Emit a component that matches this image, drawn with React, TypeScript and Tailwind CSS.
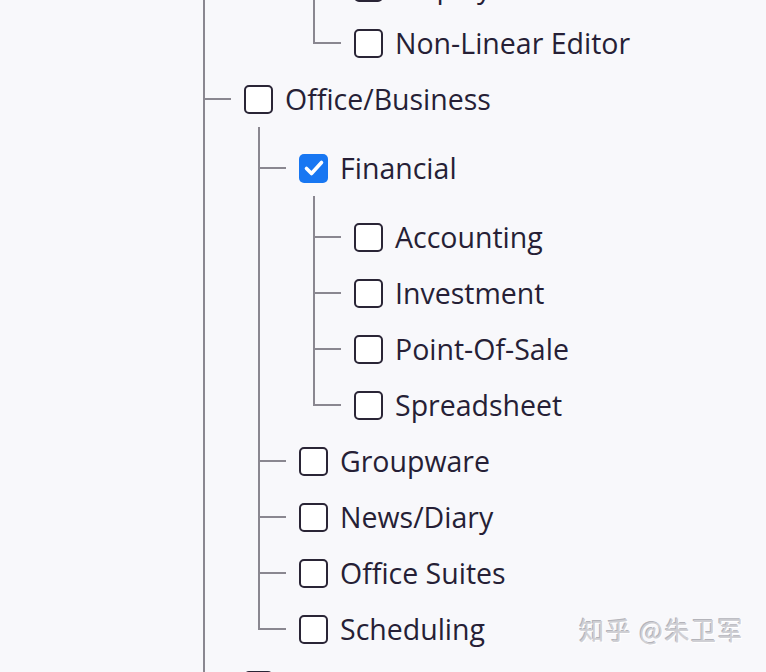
import React from 'react';

type TreeNode = {
  label: string;
  checked?: boolean;
  children?: TreeNode[];
};

const tree: TreeNode[] = [
  {
    label: "Multimedia",
    children: [
      {
        label: "Video",
        children: [{ label: "Display" }, { label: "Non-Linear Editor" }],
      },
    ],
  },
  {
    label: "Office/Business",
    children: [
      {
        label: "Financial",
        checked: true,
        children: [
          { label: "Accounting" },
          { label: "Investment" },
          { label: "Point-Of-Sale" },
          { label: "Spreadsheet" },
        ],
      },
      { label: "Groupware" },
      { label: "News/Diary" },
      { label: "Office Suites" },
      { label: "Scheduling" },
    ],
  },
  { label: "Printing" },
  { label: "Religion" },
];

const Checkbox: React.FC<{ checked?: boolean }> = ({ checked }) =>
  checked ? (
    <span className="flex h-[29px] w-[29px] shrink-0 items-center justify-center rounded-[5px] bg-[#1877f2]">
      <svg viewBox="0 0 24 24" className="h-[24px] w-[24px]" fill="none" stroke="white" strokeWidth="3.6" strokeLinecap="round" strokeLinejoin="round">
        <path d="M4.5 12.5l5 5L19.5 6.5" />
      </svg>
    </span>
  ) : (
    <span className="h-[29px] w-[29px] shrink-0 rounded-[5px] border-2 border-[#2a2536] bg-white" />
  );

const TreeItem: React.FC<{ node: TreeNode; first: boolean; last: boolean }> = ({ node, first, last }) => (
  <li className="flex">
    {/* connector */}
    <div className="flex w-[28px] shrink-0 flex-col">
      <div className={first ? "h-[40px] w-[2px] bg-[#8a8790]" : "h-[27px] w-[2px] bg-[#8a8790]"} />
      <div className="h-[2px] w-full bg-[#8a8790]" />
      <div className={last ? "flex-1" : "w-[2px] flex-1 bg-[#8a8790]"} />
    </div>

    <div className={first ? "ml-[13px] flex flex-col pt-[13px]" : "ml-[13px] flex flex-col"}>
      <div className="flex h-[56px] items-center gap-[12px]">
        <Checkbox checked={node.checked} />
        <span className="whitespace-nowrap text-[28.5px] leading-none text-[#261f36]">{node.label}</span>
      </div>
      {node.children && <TreeList nodes={node.children} className="ml-[14px]" />}
    </div>
  </li>
);

const TreeList: React.FC<{ nodes: TreeNode[]; className?: string; open?: boolean }> = ({ nodes, className, open }) => (
  <ul className={className}>
    {nodes.map((n, i) => (
      <TreeItem key={n.label} node={n} first={i === 0} last={!open && i === nodes.length - 1} />
    ))}
  </ul>
);

export default function App() {
  return (
    <div
      className="relative h-[672px] w-[766px] overflow-hidden bg-[#f8f8fb]"
      style={{ fontFamily: '"Open Sans", "Noto Sans", sans-serif' }}
    >
      <div className="mt-[-192px]">
        <TreeList nodes={tree} className="ml-[203px]" open />
      </div>

      {/* watermark */}
      <div
        className="absolute right-[22px] bottom-[24px] text-[25px] tracking-[1.5px] text-[#cfcfd4]"
        style={{ fontFamily: '"Noto Sans CJK SC", sans-serif', textShadow: '1px 1px 0 #ffffff, -1px -1px 0 #b4b4ba' }}
      >
        知乎 @朱卫军
      </div>
    </div>
  );
}
